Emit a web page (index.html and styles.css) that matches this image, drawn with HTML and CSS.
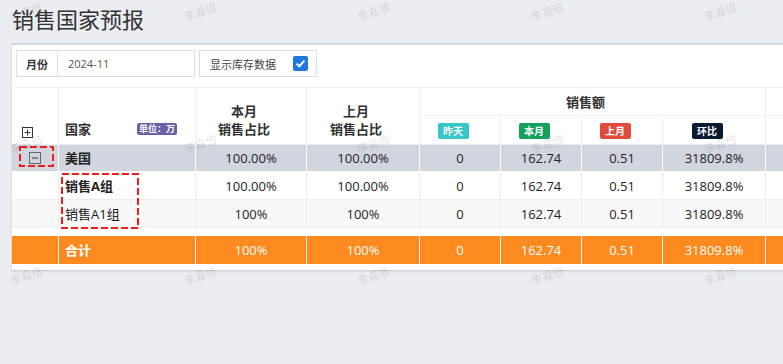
FILE: index.html
```html
<!DOCTYPE html>
<html lang="zh">
<head>
    <meta charset="UTF-8">
    <meta name="viewport" content="width=device-width, initial-scale=1.0">
    <title>销售国家预报</title>
    <link rel="stylesheet" href="styles.css">
</head>
<body>
    <h1 class="titulo">销售国家预报</h1>

    <div class="tarjeta">
        <!-- Filtros: mes y check de stock -->
        <div class="filtros">
            <div class="campo">
                <span class="campo-etiqueta">月份</span>
                <span class="campo-valor">2024-11</span>
            </div>
            <div class="campo campo-check">
                <span>显示库存数据</span>
                <svg width="15" height="15" viewBox="0 0 15 15">
                    <rect x="0" y="0" width="15" height="15" rx="2" fill="#1f78df"/>
                    <path d="M3.6 7.6 L6.3 10.2 L11.4 4.6" fill="none" stroke="#fff" stroke-width="2"/>
                </svg>
            </div>
        </div>

        <!-- Tabla de ventas por país -->
        <div class="tabla-caja">
            <table class="tabla">
                <colgroup>
                    <col style="width:47px">
                    <col style="width:137px">
                    <col style="width:111px">
                    <col style="width:113px">
                    <col style="width:81px">
                    <col style="width:81px">
                    <col style="width:81px">
                    <col style="width:103px">
                    <col style="width:160px">
                </colgroup>
                <thead>
                    <tr class="cab-1">
                        <th rowspan="2" class="cab-toggle">
                            <svg width="11" height="11" viewBox="0 0 11 11">
                                <rect x="0.5" y="0.5" width="10" height="10" fill="none" stroke="#333"/>
                                <path d="M2.5 5.5 H8.5 M5.5 2.5 V8.5" stroke="#333"/>
                            </svg>
                        </th>
                        <th rowspan="2" class="cab-pais">
                            <div class="pais-linea">
                                <span>国家</span>
                                <span class="unidad">单位：万</span>
                            </div>
                        </th>
                        <th rowspan="2" class="cab-doble">本月<br>销售占比</th>
                        <th rowspan="2" class="cab-doble">上月<br>销售占比</th>
                        <th colspan="4" class="cab-grupo">销售额</th>
                        <th></th>
                    </tr>
                    <tr class="cab-2">
                        <th><span class="etiqueta ayer">昨天</span></th>
                        <th><span class="etiqueta mes">本月</span></th>
                        <th><span class="etiqueta anterior">上月</span></th>
                        <th><span class="etiqueta ratio">环比</span></th>
                        <th></th>
                    </tr>
                </thead>
                <tbody>
                    <tr class="fila-pais">
                        <td class="celda-toggle">
                            <svg width="12" height="12" viewBox="0 0 12 12">
                                <rect x="0.5" y="0.5" width="11" height="11" fill="none" stroke="#666"/>
                                <path d="M3 6 H9" stroke="#333"/>
                            </svg>
                        </td>
                        <td class="nombre fuerte">美国</td>
                        <td>100.00%</td>
                        <td>100.00%</td>
                        <td>0</td>
                        <td>162.74</td>
                        <td>0.51</td>
                        <td>31809.8%</td>
                        <td></td>
                    </tr>
                    <tr class="fila-grupo">
                        <td></td>
                        <td class="nombre fuerte">销售A组</td>
                        <td>100.00%</td>
                        <td>100.00%</td>
                        <td>0</td>
                        <td>162.74</td>
                        <td>0.51</td>
                        <td>31809.8%</td>
                        <td></td>
                    </tr>
                    <tr class="fila-sub">
                        <td></td>
                        <td class="nombre">销售A1组</td>
                        <td>100%</td>
                        <td>100%</td>
                        <td>0</td>
                        <td>162.74</td>
                        <td>0.51</td>
                        <td>31809.8%</td>
                        <td></td>
                    </tr>
                    <tr class="separador"><td colspan="9"></td></tr>
                    <tr class="fila-total">
                        <td></td>
                        <td class="nombre fuerte">合计</td>
                        <td>100%</td>
                        <td>100%</td>
                        <td>0</td>
                        <td>162.74</td>
                        <td>0.51</td>
                        <td>31809.8%</td>
                        <td></td>
                    </tr>
                </tbody>
            </table>
            <!-- Marcas rojas de revisión -->
            <svg class="marcas" width="200" height="160">
                <rect x="8" y="60" width="33" height="19" fill="none" stroke="#f21b1b" stroke-width="2" stroke-dasharray="7 3"/>
                <rect x="50" y="87" width="76" height="54" fill="none" stroke="#f21b1b" stroke-width="2" stroke-dasharray="7 3"/>
            </svg>
        </div>
    </div>

    <!-- Marca de agua -->
    <div class="agua">
        <span>李嘉倍</span><span>李嘉倍</span><span>李嘉倍</span><span>李嘉倍</span><span>李嘉倍</span>
        <span>李嘉倍</span><span>李嘉倍</span><span>李嘉倍</span><span>李嘉倍</span><span>李嘉倍</span>
        <span>李嘉倍</span><span>李嘉倍</span><span>李嘉倍</span><span>李嘉倍</span><span>李嘉倍</span>
    </div>
</body>
</html>
```

FILE: styles.css
```css
html, body {
    margin: 0;
    overflow: hidden;
}
body {
    position: relative;
    height: 364px;
    background: #eaedf2;
    font-family: "Open Sans", "Noto Sans CJK SC", sans-serif;
    color: #333;
}
.titulo {
    margin: 0;
    padding: 4px 12px 9px;
    font-size: 22px;
    line-height: 30px;
    font-weight: normal;
    color: #333;
}
.tarjeta {
    margin-left: 12px;
    width: 1000px;
    background: #fff;
    border-top: 2px solid #d2d6de;
    box-shadow: 0 1px 2px rgba(0, 0, 0, 0.18);
}
.filtros {
    display: flex;
    gap: 4px;
    padding: 5px 4px 0;
}
.campo {
    display: flex;
    align-items: center;
    height: 27px;
    box-sizing: border-box;
    border: 1px solid #dcdfe6;
    font-size: 11px;
}
.campo-etiqueta {
    width: 40px;
    height: 100%;
    display: flex;
    align-items: center;
    justify-content: center;
    border-right: 1px solid #dcdfe6;
    font-weight: bold;
    color: #333;
}
.campo-valor {
    width: 126px;
    padding-left: 10px;
    color: #555;
}
.campo-check {
    width: 118px;
    padding-left: 10px;
    gap: 17px;
    color: #444;
}
.campo-check svg {
    display: block;
}

.tabla-caja {
    position: relative;
    margin-top: 10px;
    padding-bottom: 6px;
}
.tabla {
    border-collapse: separate;
    border-spacing: 0;
    table-layout: fixed;
    width: 914px;
    font-size: 13px;
    border-top: 1px solid #eef0f4;
}
.tabla th,
.tabla td {
    padding: 0;
    border-right: 1px solid #ebeef3;
    border-bottom: 1px solid #ebeef3;
    text-align: center;
    line-height: 18px;
}
.tabla th {
    font-weight: bold;
    color: #303133;
}
.cab-1 {
    height: 28px;
}
.cab-2 {
    height: 29px;
}
.cab-toggle {
    vertical-align: bottom;
    text-align: left;
}
.cab-toggle svg {
    display: block;
    margin: 0 0 6px 10px;
}
.cab-pais {
    vertical-align: bottom;
    text-align: left;
}
.pais-linea {
    display: flex;
    align-items: center;
    justify-content: space-between;
    padding: 0 18px 6px 6px;
}
.unidad {
    background: #6c5fa8;
    color: #fff;
    font-size: 9px;
    line-height: 12px;
    padding: 0 2px;
    border-radius: 2px;
}
.cab-doble {
    vertical-align: bottom;
    padding: 0 14px 6px 0 !important;
}
.cab-grupo,
.cab-2 th {
    padding-right: 14px !important;
}
.etiqueta {
    display: inline-block;
    width: 31px;
    height: 16px;
    line-height: 16px;
    border-radius: 2px;
    color: #fff;
    font-size: 10px;
    vertical-align: middle;
}
.ayer { background: #37c7c8; }
.mes { background: #13a15d; }
.anterior { background: #e04b3b; }
.ratio { background: #0b1a33; }

.tabla td {
    color: #222;
}
.nombre {
    text-align: left !important;
    padding-left: 6px !important;
}
.fuerte {
    font-weight: bold;
}
.fila-pais {
    height: 27px;
    background: #d1d5de;
}
.fila-pais td {
    border-right-color: #fff;
    border-bottom-color: #fff;
}
.celda-toggle svg {
    display: block;
    margin: 0 auto;
}
.fila-grupo {
    height: 28px;
}
.fila-sub {
    height: 28px;
    background: #f8f8f9;
}
.separador {
    height: 8px;
}
.separador td {
    border: none;
}
.fila-total {
    height: 28px;
    background: #fd8a1e;
}
.fila-total td {
    color: #fff;
    border-right-color: #f3f3f3;
    border-bottom: none;
}
.marcas {
    position: absolute;
    top: 0;
    left: 0;
    pointer-events: none;
}

.agua {
    position: absolute;
    top: 0;
    left: 0;
    width: 100%;
    height: 100%;
    display: grid;
    grid-template-columns: repeat(5, 173.5px);
    grid-auto-rows: 132px;
    padding: 5px 0 0 10px;
    box-sizing: border-box;
    pointer-events: none;
}
.agua span {
    display: block;
    width: max-content;
    height: 14px;
    font-size: 11px;
    line-height: 14px;
    color: rgba(0, 0, 0, 0.13);
    transform: rotate(-18deg);
}
```
